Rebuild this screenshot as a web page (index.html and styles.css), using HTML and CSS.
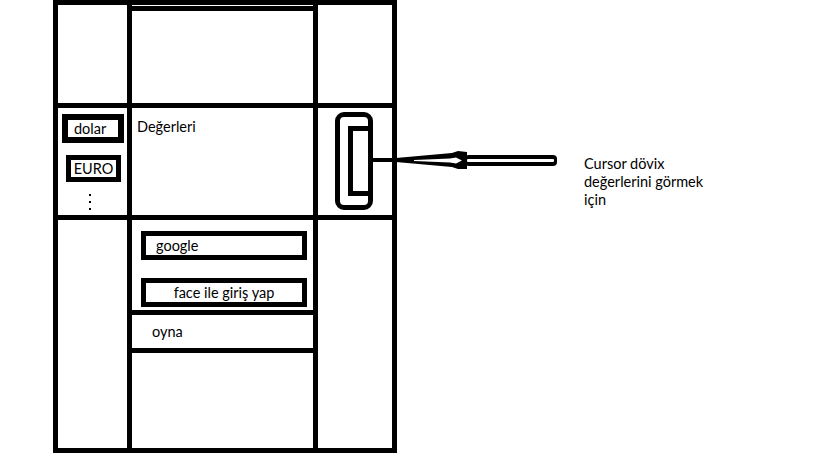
FILE: index.html
```html
<!DOCTYPE html>
<html lang="tr">
<head>
    <meta charset="UTF-8">
    <title>Döviz Wireframe</title>
    <link rel="stylesheet" href="styles.css">
</head>
<body>
    <div class="page">
        <!-- Phone wireframe -->
        <div class="phone">
            <div class="cell"></div>
            <div class="cell top-center"></div>
            <div class="cell"></div>

            <!-- Currency list -->
            <div class="cell currencies">
                <div class="currency dolar">dolar</div>
                <div class="currency euro">EURO</div>
                <div class="dots">
                    <span></span>
                    <span></span>
                    <span></span>
                </div>
            </div>
            <div class="cell values">Değerleri</div>
            <div class="cell scroll-cell">
                <div class="scroll-track">
                    <div class="scroll-thumb"></div>
                </div>
            </div>

            <div class="cell"></div>
            <div class="cell actions">
                <div class="btn google">google</div>
                <div class="btn face">face ile giriş yap</div>
                <div class="play-row">oyna</div>
            </div>
            <div class="cell"></div>
        </div>

        <!-- Annotation -->
        <p class="note">Cursor dövix<br>değerlerini görmek<br>için</p>

        <svg class="pointer" width="819" height="460" viewBox="0 0 819 460">
            <rect x="372" y="158" width="28" height="4" fill="#000"/>
            <polygon points="396,158 452,153 458,151 467,152 467,169 458,169 452,167 396,162" fill="#000"/>
            <polygon points="414,160 450,158.5 456,157.5 462,160.5 456,163.5 450,162.5 414,161" fill="#fff"/>
            <rect x="465" y="155" width="92" height="11" rx="4" fill="#000"/>
            <rect x="467" y="159" width="87" height="3" rx="1" fill="#fff"/>
        </svg>
    </div>
</body>
</html>
```

FILE: styles.css
```css
body {
    margin: 0;
    background-color: #FFFFFF;
    color: #000000;
    font-family: Lato, "Open Sans", sans-serif;
    font-size: 14.5px;
}

.page {
    position: relative;
    display: flex;
    align-items: flex-start;
    width: 819px;
    height: 460px;
}

/* black gaps draw the wireframe lines */
.phone {
    display: grid;
    grid-template-columns: 69px 181px 74px;
    grid-template-rows: 98px 107px 228px;
    gap: 5px;
    margin-left: 53px;
    border: 5px solid #000;
    background-color: #000;
}

.cell {
    background-color: #FFFFFF;
}

.top-center {
    border-top: 1px solid #FFFFFF;
    box-shadow: inset 0 5px 0 #000;
}

.currencies {
    display: flex;
    flex-direction: column;
    align-items: flex-start;
}

.currency {
    box-sizing: border-box;
    display: flex;
    align-items: center;
}

.dolar {
    width: 62px;
    height: 29px;
    margin: 6px 0 0 4px;
    padding-left: 6px;
    border: 6px solid #000;
}

.euro {
    width: 55px;
    height: 27px;
    margin: 12px 0 0 8px;
    justify-content: center;
    border: 5px solid #000;
}

.dots {
    display: flex;
    flex-direction: column;
    gap: 5px;
    margin: 12px 0 0 31px;
}

.dots span {
    width: 2px;
    height: 2px;
    background-color: #000;
}

.values {
    padding: 10px 0 0 5px;
}

.scroll-cell {
    padding: 4px 0 0 17px;
}

.scroll-track {
    box-sizing: border-box;
    display: flex;
    align-items: center;
    justify-content: flex-end;
    width: 38px;
    height: 98px;
    border: 5px solid #000;
    border-radius: 9px;
}

.scroll-thumb {
    box-sizing: border-box;
    width: 25px;
    height: 70px;
    margin-right: -5px;
    border: 5px solid #000;
}

.actions {
    display: flex;
    flex-direction: column;
}

.btn {
    box-sizing: border-box;
    display: flex;
    align-items: center;
    width: 166px;
    height: 29px;
    margin-left: 9px;
    border: 5px solid #000;
}

.google {
    margin-top: 11px;
    padding-left: 10px;
}

.face {
    margin-top: 18px;
    justify-content: center;
}

.play-row {
    display: flex;
    align-items: center;
    height: 33px;
    margin-top: 3px;
    padding-left: 20px;
    border-top: 5px solid #000;
    border-bottom: 5px solid #000;
}

.note {
    margin: 155px 0 0 187px;
    line-height: 18px;
}

.pointer {
    position: absolute;
    top: 0;
    left: 0;
    pointer-events: none;
}
```
